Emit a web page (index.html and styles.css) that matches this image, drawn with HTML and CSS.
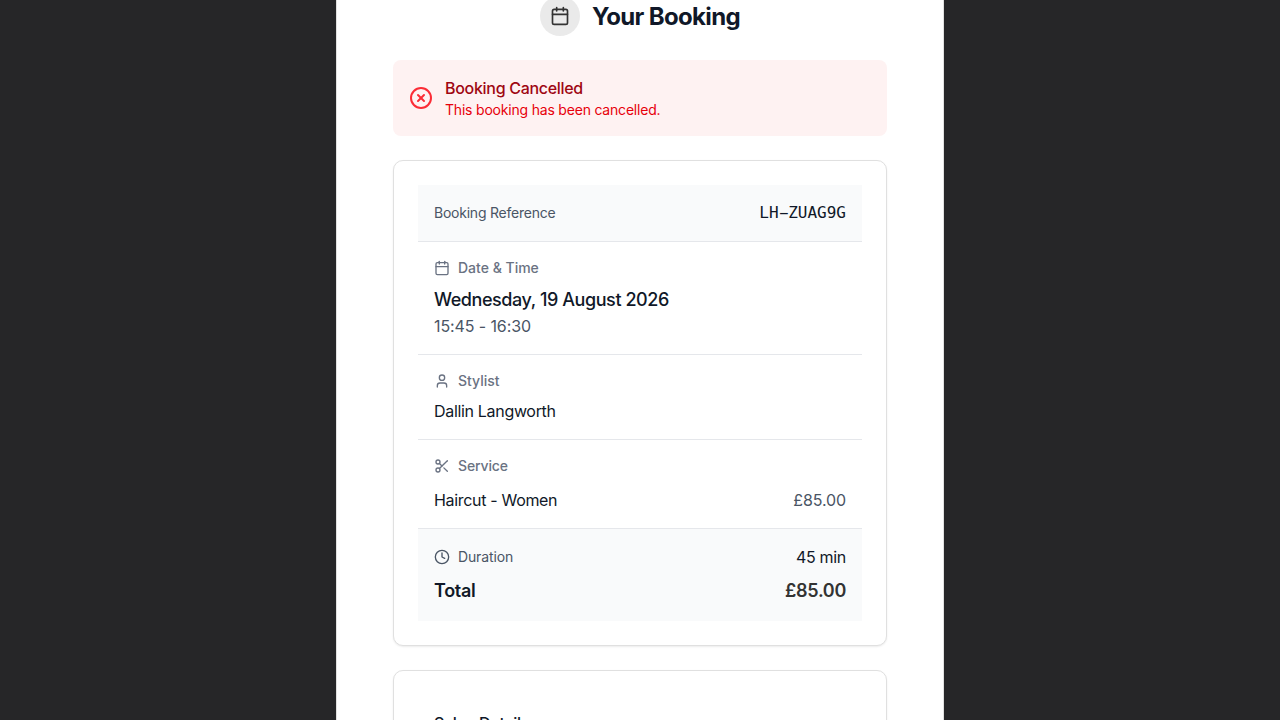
FILE: index.html
```html
<!DOCTYPE html>
<html lang="en">
<head>
  <meta charset="UTF-8" />
  <meta name="viewport" content="width=device-width, initial-scale=1.0"/>
  <title>Your Booking</title>
  <link rel="stylesheet" href="styles.css">
</head>
<body>
  <main class="panel">
    <header class="page-header">
      <span class="header-icon">
        <svg class="icon" width="20" height="20" viewBox="0 0 24 24"><path d="M8 2v4"/><path d="M16 2v4"/><rect width="18" height="18" x="3" y="4" rx="2"/><path d="M3 10h18"/></svg>
      </span>
      <h1>Your Booking</h1>
    </header>

    <div class="alert">
      <svg class="icon" width="24" height="24" viewBox="0 0 24 24"><circle cx="12" cy="12" r="10"/><path d="m15 9-6 6"/><path d="m9 9 6 6"/></svg>
      <div>
        <p class="alert-title">Booking Cancelled</p>
        <p class="alert-text">This booking has been cancelled.</p>
      </div>
    </div>

    <section class="card">
      <div class="row reference">
        <span class="reference-label">Booking Reference</span>
        <span class="reference-code">LH<span class="dash">-</span>ZUAG9G</span>
      </div>

      <div class="row">
        <div class="label">
          <svg class="icon" width="16" height="16" viewBox="0 0 24 24"><path d="M8 2v4"/><path d="M16 2v4"/><rect width="18" height="18" x="3" y="4" rx="2"/><path d="M3 10h18"/></svg>
          Date &amp; Time
        </div>
        <p class="date">Wednesday, 19 August 2026</p>
        <p class="time">15:45 - 16:30</p>
      </div>

      <div class="row">
        <div class="label">
          <svg class="icon" width="16" height="16" viewBox="0 0 24 24"><path d="M19 21v-2a4 4 0 0 0-4-4H9a4 4 0 0 0-4 4v2"/><circle cx="12" cy="7" r="4"/></svg>
          Stylist
        </div>
        <p>Dallin Langworth</p>
      </div>

      <div class="row">
        <div class="label service-label">
          <svg class="icon" width="16" height="16" viewBox="0 0 24 24"><circle cx="6" cy="6" r="3"/><path d="M8.12 8.12 12 12"/><path d="M20 4 8.12 15.88"/><circle cx="6" cy="18" r="3"/><path d="M14.8 14.8 20 20"/></svg>
          Service
        </div>
        <div class="line">
          <span>Haircut - Women</span>
          <span class="price">£85.00</span>
        </div>
      </div>

      <div class="row summary">
        <div class="line">
          <span class="duration">
            <svg class="icon" width="16" height="16" viewBox="0 0 24 24"><circle cx="12" cy="12" r="10"/><path d="M12 6v6l4 2"/></svg>
            Duration
          </span>
          <span>45 min</span>
        </div>
        <div class="line total">
          <span>Total</span>
          <span class="total-price">£85.00</span>
        </div>
      </div>
    </section>

    <section class="card salon">
      <h2>Salon Details</h2>
    </section>
  </main>
</body>
</html>
```

FILE: styles.css
```css
* {
  box-sizing: border-box;
}

body {
  margin: 0;
  height: 100vh;
  overflow: hidden;
  display: flex;
  justify-content: center;
  background-color: #262628;
  font-family: Inter, "Liberation Sans", sans-serif;
  font-size: 16px;
  line-height: 24px;
  letter-spacing: -0.32px;
  color: #101828;
}

h1, h2, p {
  margin: 0;
}

.icon {
  flex-shrink: 0;
  fill: none;
  stroke: currentColor;
  stroke-width: 2;
  stroke-linecap: round;
  stroke-linejoin: round;
}

.panel {
  width: 608px;
  height: 100vh;
  overflow: hidden;
  flex-shrink: 0;
  padding: 0 56px;
  background-color: #fff;
  border-left: 1px solid #e0e0e0;
  border-right: 1px solid #e0e0e0;
}

.page-header {
  display: flex;
  align-items: center;
  justify-content: center;
  gap: 12px;
  height: 40px;
  /* header is scrolled slightly past the top */
  margin-top: -4px;
  margin-bottom: 24px;
}

.header-icon {
  display: flex;
  align-items: center;
  justify-content: center;
  width: 40px;
  height: 40px;
  border-radius: 50%;
  background-color: #eaeaea;
  color: #333;
}

h1 {
  padding-top: 2px;
  font-size: 24px;
  line-height: 32px;
  font-weight: 700;
  letter-spacing: -0.66px;
}

.alert {
  display: flex;
  align-items: center;
  gap: 12px;
  padding: 16px;
  margin-bottom: 24px;
  border-radius: 8px;
  background-color: #fef2f2;
  color: #fb2c36;
}

.alert-title {
  font-weight: 500;
  letter-spacing: -0.3px;
  color: #9f0712;
}

.alert-text {
  font-size: 14px;
  line-height: 20px;
  letter-spacing: -0.2px;
  color: #e7000b;
}

.card {
  padding: 24px;
  margin-bottom: 24px;
  background-color: #fff;
  border: 1px solid #e0e0e0;
  border-radius: 10px;
  box-shadow: 0 1px 2px rgba(0, 0, 0, 0.08);
}

.row {
  padding: 16px;
  border-bottom: 1px solid #e5e7eb;
}

.reference {
  display: flex;
  align-items: center;
  justify-content: space-between;
  background-color: #f9fafb;
}

.reference-label {
  font-size: 14px;
  line-height: 20px;
  letter-spacing: -0.23px;
  color: #4a5565;
}

.reference-code {
  font-family: "DejaVu Sans Mono", monospace;
  font-weight: 500;
  letter-spacing: 0;
}

.dash {
  display: inline-block;
  transform: scaleX(1.9);
}

.label {
  display: flex;
  align-items: center;
  gap: 8px;
  margin-bottom: 8px;
  font-size: 14px;
  line-height: 20px;
  font-weight: 500;
  letter-spacing: 0;
  color: #6a7282;
}

.service-label {
  margin-bottom: 12px;
  letter-spacing: -0.12px;
}

.date {
  font-size: 18px;
  line-height: 28px;
  font-weight: 500;
  letter-spacing: -0.43px;
}

.time, .price {
  letter-spacing: -0.1px;
  color: #4a5565;
}

.line {
  display: flex;
  align-items: center;
  justify-content: space-between;
}

.summary {
  border-bottom: none;
  background-color: #f9fafb;
}

.duration {
  display: flex;
  align-items: center;
  gap: 8px;
  font-size: 14px;
  line-height: 20px;
  letter-spacing: -0.13px;
  color: #4a5565;
}

.total {
  margin-top: 8px;
  font-size: 18px;
  line-height: 28px;
  font-weight: 600;
  letter-spacing: -0.3px;
}

.total-price {
  color: #333;
}

.salon {
  padding: 40px;
}

h2 {
  font-size: 16px;
  line-height: 24px;
  font-weight: 500;
}
```
